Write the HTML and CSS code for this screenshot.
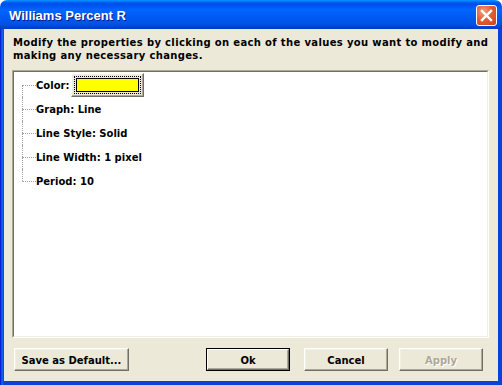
FILE: index.html
```html
<!DOCTYPE html>
<html>
<head>
<meta charset="utf-8">
<link rel="stylesheet" href="styles.css">
</head>
<body>
<div class="window">
  <div class="titlebar">
    <span class="title">Williams Percent R</span>
    <span class="close">
      <svg width="13" height="13" viewBox="0 0 13 13"><path d="M2 2 L11 11 M11 2 L2 11" stroke="#fff" stroke-width="2.4" stroke-linecap="square"/></svg>
    </span>
  </div>
  <div class="frame">
    <div class="client">
      <p class="desc">Modify the properties by clicking on each of the values you want to modify and<br>making any necessary changes.</p>
      <div class="panel">
        <div class="tree">
          <div class="row first">
            <span class="conn"><span class="up"></span><span class="down"></span></span>
            <span class="label">Color:</span>
            <span class="colorbtn"><span class="focus"><span class="swatch"></span></span></span>
          </div>
          <div class="row">
            <span class="conn"><span class="up"></span><span class="down"></span></span>
            <span class="label">Graph: Line</span>
          </div>
          <div class="row">
            <span class="conn"><span class="up"></span><span class="down"></span></span>
            <span class="label">Line Style: Solid</span>
          </div>
          <div class="row">
            <span class="conn"><span class="up"></span><span class="down"></span></span>
            <span class="label">Line Width: 1 pixel</span>
          </div>
          <div class="row last">
            <span class="conn"><span class="up"></span><span class="down"></span></span>
            <span class="label">Period: 10</span>
          </div>
        </div>
      </div>
      <div class="buttons">
        <span class="btn save">Save as Default...</span>
        <span class="spacer"></span>
        <span class="btn ok"><span class="inner">Ok</span></span>
        <span class="btn cancel">Cancel</span>
        <span class="btn apply disabled">Apply</span>
      </div>
    </div>
  </div>
</div>
</body>
</html>
```

FILE: styles.css
```css
* { box-sizing: border-box; }
html, body { margin: 0; padding: 0; background: #ffffff; }
body { width: 502px; height: 385px; overflow: hidden; }

.window {
  width: 502px;
  height: 385px;
  display: flex;
  flex-direction: column;
  font-family: "DejaVu Sans", Verdana, sans-serif;
  font-weight: bold;
  font-size: 10px;
  color: #000;
}

.titlebar {
  height: 29px;
  flex: none;
  border-radius: 7px 7px 0 0;
  background: linear-gradient(to bottom,
    #0997FF 0px, #0053EE 3px, #0050EE 5px, #0066FF 10px,
    #0058F0 18px, #0054E3 24px, #0044CF 27px, #003DC0 29px);
  display: flex;
  align-items: center;
  padding: 0 5px 0 9px;
}
.title {
  color: #fff;
  font-family: "Liberation Sans", Arial, sans-serif;
  font-size: 13px;
  font-weight: bold;
  text-shadow: 1px 1px 0 #0A1883;
  flex: 1;
  padding-top: 1px;
}
.close {
  width: 21px;
  height: 21px;
  margin-top: 2px;
  border: 1px solid #fff;
  border-radius: 3px;
  background: radial-gradient(circle at 35% 30%, #F0A285 0%, #E35F35 45%, #C7421A 100%);
  display: flex;
  align-items: center;
  justify-content: center;
}
.close svg { display: block; }

.frame {
  flex: 1;
  display: flex;
  padding: 0 4px 4px 4px;
  background: linear-gradient(to right, #0019CF 0px, #0831D9 1px, #166AEE 2px, #0842D8 4px);
}
.client {
  flex: 1;
  background: #ECE9D8;
  display: flex;
  flex-direction: column;
  padding: 7px 9px 0 8px;
}

.desc {
  margin: 0 0 0 1px;
  line-height: 13px;
  letter-spacing: 0.35px;
}

.panel {
  margin-top: 8px;
  height: 268px;
  border-style: solid;
  border-width: 1px;
  border-color: #ACA899 #FFFFFF #FFFFFF #ACA899;
  background: #fff;
}
.tree {
  height: 100%;
  border-style: solid;
  border-width: 1px;
  border-color: #716F64 #F1EFE2 #F1EFE2 #716F64;
  padding: 1px 0 0 8px;
  display: flex;
  flex-direction: column;
}
.row {
  height: 24px;
  display: flex;
  align-items: center;
}
.conn {
  width: 14px;
  height: 24px;
  display: flex;
  flex-direction: column;
  flex: none;
}
.conn .up {
  height: 12px;
  border-left: 1px dotted #A0A0A0;
}
.conn .down {
  height: 12px;
  border-left: 1px dotted #A0A0A0;
  border-top: 1px dotted #A0A0A0;
}
.row.first .conn .up { border-left-color: transparent; }
.row.last .conn .down { border-left-color: transparent; }
.label { padding-top: 1px; }

.colorbtn {
  margin-left: 2px;
  width: 73px;
  height: 24px;
  background: #ECE9D8;
  border-style: solid;
  border-width: 1px;
  border-color: #FFFFFF #716F64 #716F64 #FFFFFF;
  box-shadow: inset -1px -1px 0 #ACA899, inset 1px 1px 0 #F1EFE2;
  padding: 2px;
}
.colorbtn .focus {
  display: flex;
  width: 100%;
  height: 100%;
  border: 1px dotted #000;
  padding: 1px;
}
.colorbtn .swatch {
  flex: 1;
  background: #FFFF00;
  border: 1px solid #000;
}

.buttons {
  display: flex;
  margin-top: 10px;
  padding-left: 2px;
}
.btn {
  height: 23px;
  display: flex;
  align-items: center;
  justify-content: center;
  background: #ECE9D8;
  border-style: solid;
  border-width: 1px;
  border-color: #FFFFFF #716F64 #716F64 #FFFFFF;
  box-shadow: inset -1px -1px 0 #ACA899, inset 1px 1px 0 #F1EFE2;
  padding-top: 1px;
}
.save { width: 115px; }
.spacer { flex: 1; }
.ok {
  width: 84px;
  border: 1px solid #000;
  box-shadow: none;
  padding: 0;
}
.ok .inner {
  width: 100%;
  height: 100%;
  display: flex;
  align-items: center;
  justify-content: center;
  border-style: solid;
  border-width: 1px;
  border-color: #FFFFFF #716F64 #716F64 #FFFFFF;
  box-shadow: inset -1px -1px 0 #ACA899;
  padding-top: 1px;
}
.cancel { width: 84px; margin-left: 14px; }
.apply { width: 84px; margin-left: 11px; margin-right: 6px; }
.disabled { color: #ACA899; text-shadow: 1px 1px 0 #fff; }
```
